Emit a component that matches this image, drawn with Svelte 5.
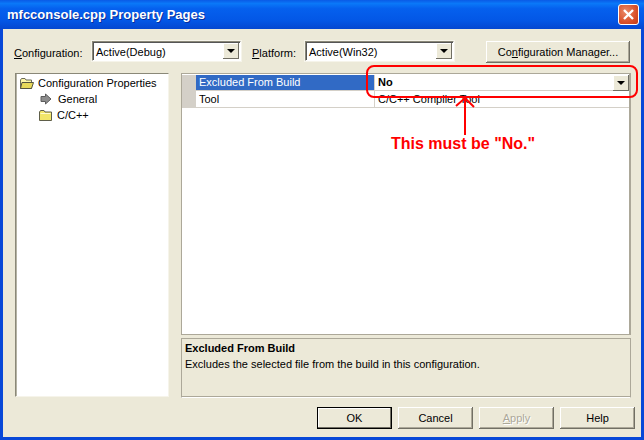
<script>
	const buttons = [
		{ label: 'OK', key: 'O', rest: 'K', primary: true },
		{ label: 'Cancel', key: 'C', rest: 'ancel' },
		{ label: 'Apply', key: 'A', rest: 'pply', disabled: true },
		{ label: 'Help', key: 'H', rest: 'elp' }
	];
</script>

<div class="window">
	<header class="titlebar">
		<h1>mfcconsole.cpp Property Pages</h1>
		<button class="close" aria-label="Close">
			<svg width="13" height="13" viewBox="0 0 13 13">
				<path d="M2 2 L11 11 M11 2 L2 11" stroke="#fff" stroke-width="2.4" />
			</svg>
		</button>
	</header>

	<div class="body">
		<div class="config">
			<span class="label first"><u>C</u>onfiguration:</span>
			<div class="combo first-combo">
				<span>Active(Debug)</span>
				<i class="drop"><b></b></i>
			</div>
			<span class="label second"><u>P</u>latform:</span>
			<div class="combo second-combo">
				<span>Active(Win32)</span>
				<i class="drop"><b></b></i>
			</div>
			<button class="btn manager">Co<u>n</u>figuration Manager...</button>
		</div>

		<div class="panes">
			<div class="tree">
				<div class="node">
					<svg width="15" height="14" viewBox="0 0 15 14">
						<path d="M1.5 4 L2.5 2.5 H6 L7 4 H12.5 V12.5 H1.5 Z" fill="#fdf6a8" stroke="#6b6a58" />
						<path d="M3 6.5 H14.5 L12.5 12.5 H1.5 Z" fill="#e8d95a" stroke="#55543f" />
					</svg>
					<span>Configuration Properties</span>
				</div>
				<div class="node child">
					<svg width="12" height="12" viewBox="0 0 12 12">
						<path d="M5.5 1 L11 6 L5.5 11 V8.5 H1 V3.5 H5.5 Z" fill="#8d8d8d" stroke="#5c5c5c" />
					</svg>
					<span>General</span>
				</div>
				<div class="node folder">
					<svg width="15" height="13" viewBox="0 0 15 13">
						<path d="M1.5 3 L2.5 1.5 H6 L7 3 H13.5 V11.5 H1.5 Z" fill="#f2e66a" stroke="#5f5e4a" />
						<path d="M2.5 4.5 H12.5" stroke="#fffbd0" />
					</svg>
					<span>C/C++</span>
				</div>
			</div>

			<div class="right">
				<div class="grid">
					<div class="row first-row">
						<div class="gutter"></div>
						<div class="name selected">Excluded From Build</div>
						<div class="value editing">
							<b>No</b>
							<i class="drop"><b></b></i>
						</div>
					</div>
					<div class="row">
						<div class="gutter"></div>
						<div class="name">Tool</div>
						<div class="value">C/C++ Compiler Tool</div>
					</div>
				</div>
				<div class="description">
					<strong>Excluded From Build</strong>
					<p>Excludes the selected file from the build in this configuration.</p>
				</div>
			</div>
		</div>

		<div class="actions">
			{#each buttons as b}
				<button class="btn action" class:primary={b.primary} class:disabled={b.disabled}>
					{#if b.disabled}<u>{b.key}</u>{b.rest}{:else}{b.label}{/if}
				</button>
			{/each}
		</div>
	</div>

	<!-- callout drawn over the dialog -->
	<svg class="callout" width="644" height="440" viewBox="0 0 644 440">
		<rect x="367" y="66" width="270" height="31" rx="7" fill="none" stroke="#f00" stroke-width="2" />
		<path d="M465 135 V98 M456 106 L465 98 L474 107" fill="none" stroke="#f00" stroke-width="2" />
	</svg>
	<div class="note">This must be "No."</div>
</div>

<style>
	:global(body) {
		margin: 0;
	}

	.window {
		position: relative;
		display: flex;
		flex-direction: column;
		width: 644px;
		height: 440px;
		overflow: hidden;
		background: #0848d8;
		font-family: 'Liberation Sans', Arial, sans-serif;
		font-size: 11px;
		color: #000;
	}

	.titlebar {
		display: flex;
		align-items: center;
		justify-content: space-between;
		height: 29px;
		padding: 0 5px 0 7px;
		box-sizing: border-box;
		background: linear-gradient(180deg, #0a5ae6 0%, #0a78f8 12%, #0560ee 30%, #0357e6 70%, #0447d0 100%);
	}

	h1 {
		margin: 0;
		font-family: 'Liberation Sans', Arial, sans-serif;
		font-size: 13px;
		font-weight: bold;
		color: #fff;
		text-shadow: 1px 1px 0 #0a2f9a;
	}

	.close {
		display: flex;
		align-items: center;
		justify-content: center;
		width: 21px;
		height: 21px;
		padding: 0;
		border: 1px solid #fff;
		border-radius: 3px;
		background: radial-gradient(circle at 35% 35%, #ea8a68, #d9512b 60%, #c23a15);
	}

	.body {
		flex: 1;
		display: flex;
		flex-direction: column;
		margin: 0 3px 3px;
		padding: 12px 6px 0 12px;
		background: #ece9d8;
		min-height: 0;
	}

	.config {
		display: flex;
		align-items: flex-start;
		height: 32px;
	}

	.label {
		line-height: 24px;
	}

	.label.first {
		width: 78px;
		flex: none;
		margin-left: -1px;
	}

	.label.second {
		width: 53px;
		flex: none;
		margin-left: 11px;
	}

	.combo {
		display: flex;
		align-items: center;
		justify-content: space-between;
		height: 20px;
		box-sizing: border-box;
		padding: 0 1px 0 3px;
		background: #fff;
		border: 1px solid;
		border-color: #8a8878 #fff #fff #8a8878;
		box-shadow: inset 1px 1px 0 #555;
		outline: 1px solid #f6f4ea;
	}

	.combo span {
		padding-top: 1px;
	}

	.first-combo {
		width: 149px;
		flex: none;
	}

	.second-combo {
		width: 149px;
		flex: none;
	}

	.drop {
		display: flex;
		align-items: center;
		justify-content: center;
		width: 16px;
		height: 16px;
		flex: none;
		background: #ece9d8;
		box-shadow: inset -1px -1px 0 #716f64, inset 1px 1px 0 #fff;
	}

	.drop b {
		width: 0;
		height: 0;
		border-left: 4px solid transparent;
		border-right: 4px solid transparent;
		border-top: 4px solid #000;
	}

	.btn {
		box-sizing: border-box;
		padding: 0;
		background: #ece9d8;
		border: none;
		font: inherit;
		color: #000;
		box-shadow:
			inset -1px -1px 0 #716f64,
			inset 1px 1px 0 #fff,
			inset -2px -2px 0 #aca899;
	}

	.manager {
		width: 144px;
		height: 22px;
		margin-left: 32px;
		flex: none;
	}

	.panes {
		display: flex;
		gap: 12px;
		height: 325px;
		margin-right: 4px;
	}

	.tree {
		width: 154px;
		height: 324px;
		box-sizing: border-box;
		flex: none;
		padding: 1px 0 0 3px;
		background: #fff;
		border: 1px solid;
		border-color: #8a8878 #f6f4ea #f6f4ea #8a8878;
		box-shadow: inset 1px 0 0 #b5b3a4;
	}

	.node {
		display: flex;
		align-items: center;
		gap: 4px;
		height: 16px;
	}

	.child {
		padding-left: 21px;
		gap: 6px;
	}

	.folder {
		padding-left: 19px;
	}

	.right {
		flex: 1;
		display: flex;
		flex-direction: column;
		gap: 3px;
	}

	.grid {
		height: 262px;
		box-sizing: border-box;
		background: #fff;
		border: 1px solid #aca899;
		border-right-width: 2px;
		flex: none;
	}

	.row {
		display: flex;
		height: 16px;
		border-bottom: 1px solid #d4d0c8;
		line-height: 16px;
	}

	.first-row {
		height: 15px;
		line-height: 15px;
		padding-top: 1px;
	}

	.gutter {
		width: 14px;
		flex: none;
		background: #d4d0c8;
	}

	.name {
		width: 178px;
		flex: none;
		padding-left: 3px;
		box-sizing: border-box;
	}

	.selected {
		background: #316ac5;
		color: #fff;
	}

	.value {
		flex: 1;
		display: flex;
		align-items: center;
		justify-content: space-between;
		padding-left: 3px;
		border-left: 1px solid #d4d0c8;
	}

	.description {
		height: 60px;
		box-sizing: border-box;
		padding: 1px 3px;
		border: 1px solid;
		border-color: #aca899 #aca899 #fff #aca899;
		box-shadow: inset 0 -1px 0 #aca899;
		line-height: 16px;
	}

	.description strong {
		display: block;
	}

	.description p {
		margin: 0;
	}

	.actions {
		display: flex;
		justify-content: flex-end;
		gap: 6px;
		margin-top: 9px;
	}

	.action {
		width: 75px;
		height: 22px;
	}

	.action.primary {
		outline: 1px solid #000;
		outline-offset: -1px;
		box-shadow:
			inset -2px -2px 0 #716f64,
			inset 2px 2px 0 #fff;
	}

	.action.disabled {
		color: #aca899;
		text-shadow: 1px 1px 0 #fff;
	}

	.callout {
		position: absolute;
		left: 0;
		top: 0;
		pointer-events: none;
	}

	.note {
		position: absolute;
		left: 391px;
		top: 135px;
		font-family: 'Liberation Sans', Arial, sans-serif;
		font-size: 16px;
		font-weight: bold;
		color: #f00;
	}
</style>
